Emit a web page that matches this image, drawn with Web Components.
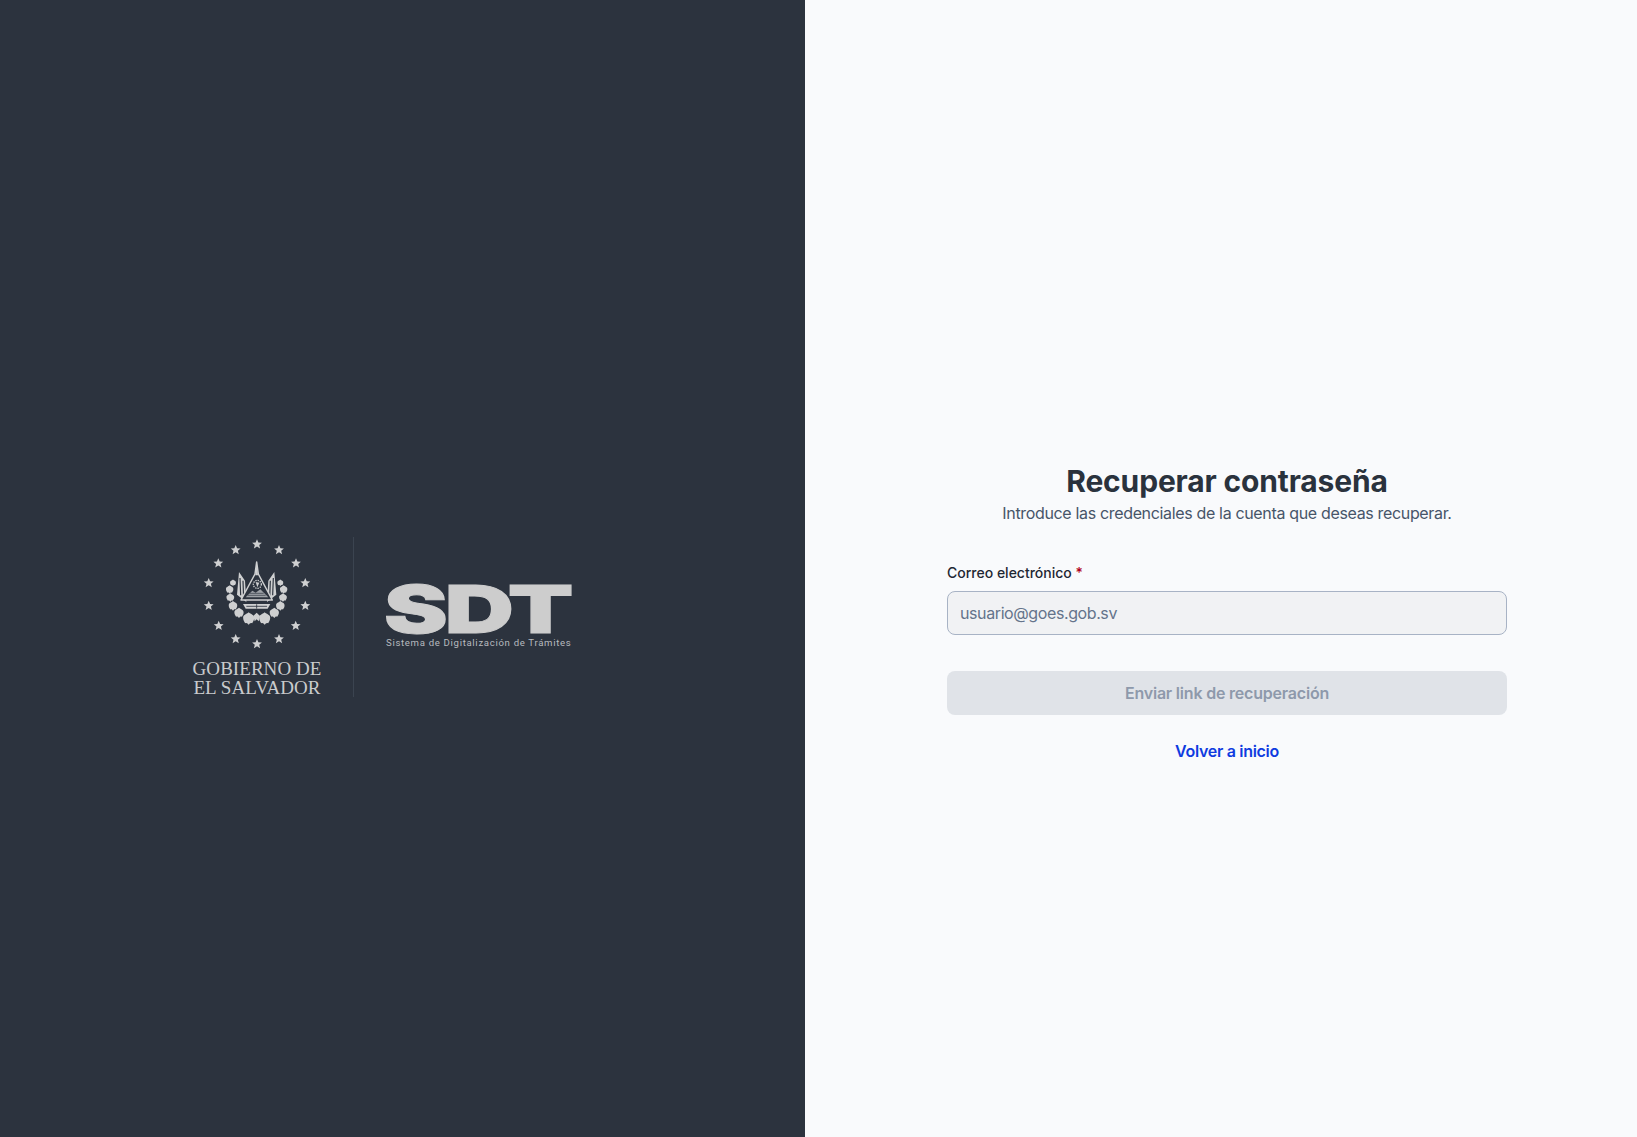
<!DOCTYPE html>
<html lang="es">
<head>
<meta charset="utf-8">
<title>Recuperar contraseña</title>
<style>
  html, body { margin: 0; height: 100%; }
  body { font-family: Inter, "Liberation Sans", sans-serif; background: #f9fafc; }
</style>
</head>
<body>
<auth-layout>
  <brand-panel slot="brand"></brand-panel>
  <recover-form slot="form"></recover-form>
</auth-layout>

<script>
class AuthLayout extends HTMLElement {
    constructor() {
        super();
        this.attachShadow({ mode: "open" });
        this.shadowRoot.innerHTML = `
        <style>
            :host { display: grid; grid-template-columns: 805px 1fr; height: 100vh; min-height: 1137px; }
            .left { background: #2c333e; padding: 537px 0 0 177px; }
            .right { background: #f9fafc; display: flex; justify-content: center; padding: 463px 0 0 12px; }
        </style>
        <div class="left"><slot name="brand"></slot></div>
        <div class="right"><slot name="form"></slot></div>`;
    }
}

class BrandPanel extends HTMLElement {
    constructor() {
        super();
        this.attachShadow({ mode: "open" });
        // star ring around the coat of arms
        const stars = [[261,73],[327,90],[378,130],[406,189],[406,257],[377,317],[327,357],[261,372],[197,357],[146,317],[116,257],[116,189],[145,130],[197,90]]
            .map(p => `<use href="#star" x="${(p[0] / 3 - 7).toFixed(1)}" y="${(p[1] / 3 - 17).toFixed(1)}"/>`).join("");
        // wreath clumps, left side, mirrored for the right one (240 space of the emblem)
        const clumps = [[54,98,.8],[44,118,1],[46,142,1.05],[54,167,1.15],[72,188,1.25],[101,205,1.5]]
            .map(p => `<use href="#leaf" transform="translate(${p[0]} ${p[1]}) scale(${p[2]})"/><use href="#leaf" transform="translate(${250 - p[0]} ${p[1]}) scale(${p[2]})"/>`).join("");
        this.shadowRoot.innerHTML = `
        <style>
            :host { display: flex; align-items: flex-start; color: #cfd0d1; }
            .gob { width: 160px; display: flex; flex-direction: column; align-items: center; }
            svg { display: block; }
            .gob-text {
                font: 400 19px/18.5px "Liberation Serif", serif; color: #c9cbcd;
                letter-spacing: 0.05px; text-align: center; white-space: nowrap; margin-top: -1px;
            }
            .rule { width: 1px; height: 160px; background: #3b4450; margin: 0 32px 0 16px; }
            .sdt { width: 187px; padding-top: 48px; }
            .mark {
                font: 900 66px/49px Inter, sans-serif; height: 49px; color: #cdcdcd; margin-left: -2px;
                transform: scaleX(1.45); transform-origin: left center; white-space: nowrap;
                -webkit-text-stroke: 1px #cdcdcd; letter-spacing: -2px;
            }
            .tag { font: 400 9.6px/12px Roboto, sans-serif; letter-spacing: .68px; color: #b7babe; white-space: nowrap; margin-top: 3px; }
        </style>
        <div class="gob">
            <svg width="160" height="124" viewBox="0 0 160 124" fill="#cfd0d1">
                <defs>
                    <polygon id="star" points="0,-5 1.4,-1.7 4.9,-1.5 2.2,0.8 3.1,4.2 0,2.3 -3.1,4.2 -2.2,0.8 -4.9,-1.5 -1.4,-1.7"/>
                    <path id="leaf" d="M0 -12 C4 -8 12 -7 11 0 C11 4 9 6 7 10 C4 8 2 10 0 13 C-2 10 -4 8 -7 10 C-9 6 -11 4 -11 0 C-12 -7 -4 -8 0 -12z"/>
                </defs>
                ${stars}
                <g transform="translate(38 13) scale(.3333)">
                    ${clumps}
                    <!-- flags -->
                    <path d="M72 66 L90 92 L94 156 L66 134z M178 66 L160 92 L156 156 L184 134z"/>
                    <path d="M75 84 L77 136 M84 92 L86 146 M175 84 L173 136 M166 92 L164 146" stroke="#2c333e" stroke-width="3.5" fill="none"/>
                    <!-- ribbon and base under the triangle -->
                    <path d="M84 162 H166 L158 176 H92z"/>
                    <path d="M94 169 H156 M125 163 V176" stroke="#2c333e" stroke-width="2.5"/>
                    <path d="M115 198 L125 188 L135 198 L131 214 L125 208 L119 214z" />
                    <!-- triangle -->
                    <path d="M125 36 L130 72 L172 150 H78 L120 72z" fill="#2c333e" stroke="#cfd0d1" stroke-width="4.5" stroke-linejoin="round"/>
                    <path d="M125 36 L129 76 H121z"/>
                    <path d="M92 142 L112 122 L122 128 L136 118 L160 142z" fill="#9ea2a7"/>
                    <path d="M98 136 H152 M104 130 H146" stroke="#2c333e" stroke-width="2"/>
                    <circle cx="127" cy="103" r="12" fill="none" stroke="#cfd0d1" stroke-width="4" stroke-dasharray="4 3"/>
                    <path d="M122 96 L127 112 L133 98z" fill="#cfd0d1"/>
                </g>
            </svg>
            <div class="gob-text">GOBIERNO DE<br>EL SALVADOR</div>
        </div>
        <div class="rule"></div>
        <div class="sdt">
            <div class="mark">SDT</div>
            <div class="tag">Sistema de Digitalización de Trámites</div>
        </div>`;
    }
}

class RecoverForm extends HTMLElement {
    constructor() {
        super();
        this.attachShadow({ mode: "open" });
        this.shadowRoot.innerHTML = `
        <style>
            :host { display: flex; flex-direction: column; width: 560px; font-family: Inter, "Liberation Sans", sans-serif; }
            h1 { margin: 0; font-size: 30px; line-height: 36px; font-weight: 700; color: #2a323d; text-align: center; letter-spacing: -0.15px; }
            p { margin: 2px 0 0; font-size: 16px; line-height: 24px; color: #475569; text-align: center; letter-spacing: -0.34px; }
            label { display: block; margin-top: 38px; font-size: 14px; line-height: 20px; font-weight: 500; color: #1f2733; }
            label b { color: #b00020; font-weight: 500; }
            input {
                display: block; box-sizing: border-box; width: 100%; height: 44px; margin-top: 8px; padding: 0 12px;
                font: 400 16px Inter, sans-serif; letter-spacing: -0.4px; background: #f1f2f4; border: 1px solid #a8b3c5; border-radius: 8px; outline: none;
            }
            input::placeholder { color: #64748b; opacity: 1; }
            button {
                display: block; width: 100%; height: 44px; margin-top: 36px; border: 0; border-radius: 8px;
                background: #e0e3e8; color: #8e99ab; font: 600 16px Inter, sans-serif; letter-spacing: -0.2px;
            }
            a { display: block; margin-top: 24px; text-align: center; font-size: 16px; line-height: 24px; font-weight: 600; letter-spacing: -0.3px; color: #0f3be0; text-decoration: none; }
        </style>
        <h1>Recuperar contraseña</h1>
        <p>Introduce las credenciales de la cuenta que deseas recuperar.</p>
        <label>Correo electrónico <b>*</b></label>
        <input type="email" placeholder="usuario@goes.gob.sv">
        <button disabled>Enviar link de recuperación</button>
        <a href="#">Volver a inicio</a>`;
    }
}

customElements.define("auth-layout", AuthLayout);
customElements.define("brand-panel", BrandPanel);
customElements.define("recover-form", RecoverForm);
</script>
</body>
</html>
